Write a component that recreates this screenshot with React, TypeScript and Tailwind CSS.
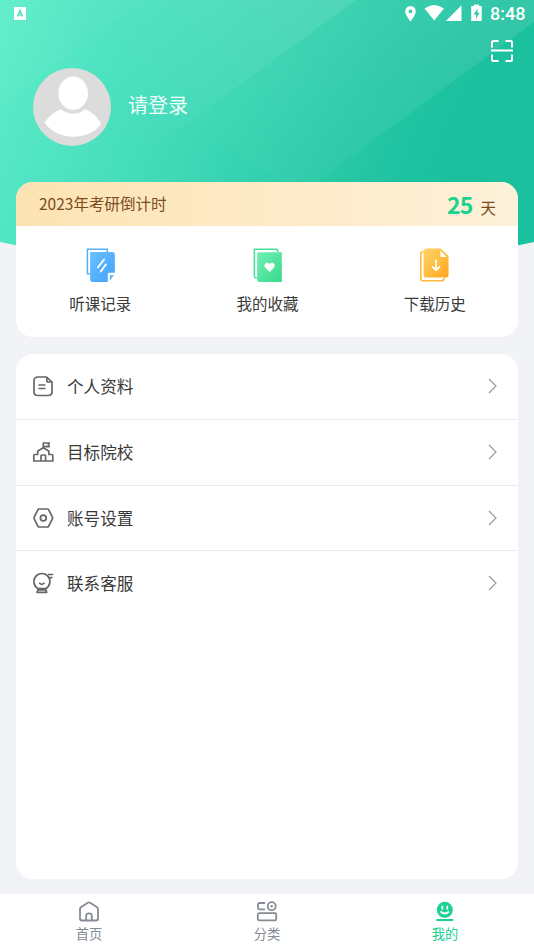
import type { ReactNode } from "react";

type Item = {
  label: string;
  icon: ReactNode;
};

function HeaderBackdrop() {
  return (
    <svg className="absolute inset-x-0 top-0 h-[262px] w-full" viewBox="0 0 534 262" preserveAspectRatio="none">
      <defs>
        <linearGradient id="base" gradientUnits="userSpaceOnUse" x1="0" y1="20" x2="440" y2="200">
          <stop offset="0" stopColor="#5eeeca" />
          <stop offset="0.2" stopColor="#50e4c2" />
          <stop offset="0.4" stopColor="#43dcb9" />
          <stop offset="0.62" stopColor="#34d1af" />
          <stop offset="0.78" stopColor="#27c8a6" />
          <stop offset="0.92" stopColor="#1dc2a0" />
          <stop offset="1" stopColor="#1bc09e" />
        </linearGradient>
        <linearGradient id="shineTop" gradientUnits="userSpaceOnUse" x1="110" y1="90" x2="340" y2="0">
          <stop offset="0" stopColor="#fff" stopOpacity="0" />
          <stop offset="1" stopColor="#fff" stopOpacity="0.1" />
        </linearGradient>
        <linearGradient id="shineMid" gradientUnits="userSpaceOnUse" x1="170" y1="160" x2="534" y2="0">
          <stop offset="0" stopColor="#fff" stopOpacity="0" />
          <stop offset="0.3" stopColor="#fff" stopOpacity="0.03" />
          <stop offset="1" stopColor="#fff" stopOpacity="0.11" />
        </linearGradient>
        <clipPath id="headerShape">
          <path d="M0 0H534V242Q267 300 0 242Z" />
        </clipPath>
      </defs>
      <g clipPath="url(#headerShape)">
        <rect width="534" height="262" fill="url(#base)" />
        <path d="M0 0H534V22L300 194L190 121L0 256Z" fill="url(#shineMid)" />
        <path d="M0 0H356L190 121L60 212L0 225Z" fill="url(#shineTop)" />
        <path d="M0 0H143L0 106Z" fill="#fff" fillOpacity="0.03" />
      </g>
    </svg>
  );
}

function StatusBar() {
  return (
    <div className="flex h-[27px] items-center justify-between pl-[14px] pr-[9px] text-white">
      <svg width="12" height="13" viewBox="0 0 12 13">
        <rect width="12" height="13" fill="#fff" />
        <path d="M3.5 9.5L6 3.5L8.5 9.5M4.4 7.7H7.6" fill="none" stroke="#50dfbe" strokeWidth="1.5" />
      </svg>
      <div className="flex items-center">
        <svg className="-mt-[1px]" width="80" height="18" viewBox="0 0 80 18" fill="#fff">
          <path fillRule="evenodd" d="M6.5 2A5.3 5.3 0 0 0 1.2 7.2C1.2 11 6.5 17.4 6.5 17.4S11.8 11 11.8 7.2A5.3 5.3 0 0 0 6.5 2ZM6.5 5.4A1.9 1.9 0 1 1 6.5 9.2A1.9 1.9 0 0 1 6.5 5.4Z" />
          <path d="M20.5 4.6Q30.2-2.6 40 4.6L30.2 16.4Z" />
          <path d="M57.5 1.2V17H42Z" />
          <path fillRule="evenodd" d="M70 .4H75V2H77.7V17H67.2V2H70ZM73.5 4.8L69.6 10.4H72V14.8L75.6 8.8H73.5Z" />
        </svg>
        <span className="ml-[6px] w-[35px] whitespace-nowrap font-[Roboto] text-[18px] font-medium leading-none">8:48</span>
      </div>
    </div>
  );
}

function ScanIcon() {
  return (
    <svg width="24" height="24" viewBox="0 0 24 24" fill="none" stroke="#fff" strokeWidth="2">
      <path d="M2 8.5V3.5Q2 2 3.5 2H8.5M15.5 2H20.5Q22 2 22 3.5V8.5M22 15.5V20.5Q22 22 20.5 22H15.5M8.5 22H3.5Q2 22 2 20.5V15.5M1 11.5H23" />
    </svg>
  );
}

function Avatar() {
  return (
    <svg width="78" height="78" viewBox="0 0 78 78">
      <circle cx="39" cy="39" r="39" fill="#dcdcdc" />
      <ellipse cx="40.2" cy="25.3" rx="14.8" ry="16.7" fill="#fff" />
      <path d="M11.6 54.5C16 48 22 43.3 28 41.2Q40.2 50.5 52 41.2C59 43.5 65 49.5 68 55.8C58 72.5 24 74 11.6 54.5Z" fill="#fff" />
    </svg>
  );
}

const actions: Item[] = [
  {
    label: "听课记录",
    icon: (
      <svg width="30" height="34" viewBox="-.8 0 30 34">
        <defs>
          <linearGradient id="blue" x1="0" y1="0" x2="1" y2="1">
            <stop stopColor="#69c2ff" />
            <stop offset="1" stopColor="#439fff" />
          </linearGradient>
        </defs>
        <path d="M4 25.8H1.6V1.3H21.5V4" fill="none" stroke="#55b0ff" strokeWidth="1.5" />
        <path d="M5.3 4H26.5Q29 4 29 6.5V24.8H23.3Q22 24.8 22 26.2V34H7Q4.3 34 4.3 31.2V5Q4.3 4 5.3 4Z" fill="url(#blue)" />
        <path d="M18.3 11.5L12 19.5M20 16.5L15 23.5" stroke="#fff" strokeWidth="1.8" strokeLinecap="round" />
        <path d="M24 32V27.2H28.2L27 29H25.8V31Z" fill="#55b0ff" />
      </svg>
    ),
  },
  {
    label: "我的收藏",
    icon: (
      <svg width="30" height="34" viewBox="-.8 0 30 34">
        <defs>
          <linearGradient id="green" x1="0" y1="0" x2="1" y2="1">
            <stop stopColor="#74f0b4" />
            <stop offset="1" stopColor="#35d98b" />
          </linearGradient>
        </defs>
        <path d="M4 29.8H3.2Q1.6 29.8 1.6 28.2V1.3H23.2Q25 1.3 25 4" fill="none" stroke="#48dd98" strokeWidth="1.5" />
        <path d="M6 4.3H29V34H7Q4.3 34 4.3 31.2V6Q4.3 4.3 6 4.3Z" fill="url(#green)" />
        <path d="M16.8 24L12.6 19.8C9.8 16.8 14 12.9 16.8 16C19.6 12.9 23.8 16.8 21 19.8Z" fill="#fff" />
      </svg>
    ),
  },
  {
    label: "下载历史",
    icon: (
      <svg width="30" height="34" viewBox="0.7 0 30 34">
        <defs>
          <linearGradient id="yellow" x1="0" y1="0" x2="1" y2="1">
            <stop stopColor="#ffd568" />
            <stop offset="1" stopColor="#ffa61f" />
          </linearGradient>
        </defs>
        <path d="M4.5 4H2.8Q1.5 4 1.5 5.3V30.5Q1.5 32.8 3.8 32.8H22Q24.5 32.8 25 30" fill="none" stroke="#fdba3d" strokeWidth="1.6" />
        <path d="M7 .5H21.5L29.2 8V27Q29.2 29.5 26.7 29.5H6.8Q4.3 29.5 4.3 27V3.2Q4.3 .5 7 .5Z" fill="url(#yellow)" />
        <path d="M21.2 2.4V9H27.3Z" fill="#fff" />
        <path d="M16.8 11.5V22M12.8 18.3L16.8 22.2L20.8 18.3" fill="none" stroke="#fff" strokeWidth="1.7" />
      </svg>
    ),
  },
];

const menu: Item[] = [
  {
    label: "个人资料",
    icon: (
      <>
        <path d="M14.5 2H6Q2 2 2 6V17Q2 20.5 6 20.5H16Q20 20.5 20 17V7.2Z" />
        <path d="M14.8 2.2V5.2Q14.8 7 16.5 7H19.5M6.5 10H13.5M6.5 13.5H13.5" />
      </>
    ),
  },
  {
    label: "目标院校",
    icon: (
      <>
        <path d="M1.8 20V14.5Q1.8 13.5 2.8 13.5H5.7V10.8Q5.7 10.1 6.3 9.7L11.3 6.8L16.3 9.7Q16.9 10.1 16.9 10.8V13.5H19.8Q20.8 13.5 20.8 14.5V20Z" />
        <path d="M9 20V14.8Q9 14 9.8 14H12.8Q13.6 14 13.6 14.8V20M11.3 6.8V2H17.3L16.3 3.8L17.3 5.6H11.3" />
      </>
    ),
  },
  {
    label: "账号设置",
    icon: (
      <>
        <path d="M7.3 2H15.3Q16.2 2 16.7 2.8L20.4 10.2Q20.8 11 20.4 11.8L16.7 19.2Q16.2 20 15.3 20H7.3Q6.4 20 5.9 19.2L2.2 11.8Q1.8 11 2.2 10.2L5.9 2.8Q6.4 2 7.3 2Z" />
        <circle cx="11.3" cy="11" r="2.9" />
      </>
    ),
  },
  {
    label: "联系客服",
    icon: (
      <>
        <path d="M6 16.5A8 8 0 1 1 13.8 16.5M6 16.5H13.8V18H6ZM7.2 10.8Q9.8 13.8 12.5 10.8M6 18L5 20.3H14.8L13.8 18" />
        <path d="M16 2.5H21.3M17.5 5.6H20.5" />
      </>
    ),
  },
];

const tabs: Item[] = [
  {
    label: "首页",
    icon: (
      <path
        d="M2 8Q2 7 2.9 6.3L9.8 1.8Q11 1 12.2 1.8L19.1 6.3Q20 7 20 8V17.5Q20 19.5 18 19.5H4Q2 19.5 2 17.5ZM8.2 19V14.5Q8.2 12.3 11 12.3T13.8 14.5V19"
        fill="none"
        stroke="#858b95"
        strokeWidth="1.8"
      />
    ),
  },
  {
    label: "分类",
    icon: (
      <g fill="none" stroke="#858b95" strokeWidth="1.8">
        <path d="M9 2H3.5Q2 2 2 3.5V6.8Q2 8.3 3.5 8.3H9" />
        <circle cx="15.7" cy="5.2" r="4" />
        <circle cx="15.7" cy="5.2" r="1.3" fill="#858b95" stroke="none" />
        <rect x="1.8" y="12.2" width="18.4" height="7.2" rx="1.5" />
      </g>
    ),
  },
  {
    label: "我的",
    icon: (
      <>
        <circle cx="10.8" cy="8.8" r="8" fill="#18d192" />
        <path d="M8.3 4.8V8.5M13.3 4.8V8.5M6.5 10.5Q10.8 14.5 15.1 10.5" fill="none" stroke="#fff" strokeWidth="1.8" />
        <path d="M2.3 19H19.3" stroke="#18d192" strokeWidth="2" />
      </>
    ),
  },
];

export default function App() {
  return (
    <div className="relative flex h-[950px] w-[534px] flex-col overflow-hidden bg-[#f1f3f7] font-['Noto_Sans_CJK_SC',sans-serif] text-[#3a3a3a]">
      <HeaderBackdrop />

      <header className="relative h-[182px] shrink-0">
        <StatusBar />
        <div className="flex items-start pl-[33px] pr-5">
          <div className="mt-[41px] flex items-center">
            <Avatar />
            <span className="ml-[17px] -mt-[5px] text-[20px] leading-7 text-white/90">请登录</span>
          </div>
          <div className="ml-auto mt-3">
            <ScanIcon />
          </div>
        </div>
      </header>

      <section className="relative mx-4 h-[155px] shrink-0 overflow-hidden rounded-[17px] bg-white">
        <div className="flex h-11 items-center justify-between bg-gradient-to-r from-[#fde3b3] to-[#fdf1d9] pl-[23px] pr-[22px] text-[#7a4b24]">
          <span className="-mt-[1px] text-[15.5px]">2023年考研倒计时</span>
          <div className="flex items-baseline">
            <strong className="text-[23px] font-bold leading-none tracking-[-0.8px] text-[#1dd291]">25</strong>
            <span className="ml-2 text-[15.5px] leading-none">天</span>
          </div>
        </div>
        <div className="grid grid-cols-3">
          {actions.map(({ label, icon }) => (
            <div key={label} className="flex flex-col items-center pl-px pt-[22px]">
              {icon}
              <span className="mt-[9px] text-[15.5px] leading-6">{label}</span>
            </div>
          ))}
        </div>
      </section>

      <section className="relative mx-4 mt-[17px] h-[525px] shrink-0 overflow-hidden rounded-[17px] bg-white">
        {menu.map(({ label, icon }, index) => (
          <div
            key={label}
            className={`flex items-center pl-4 pr-5 ${index === 1 ? "h-[66px]" : index === 3 ? "h-[64px]" : "h-[65.5px]"} ${index < menu.length - 1 ? "border-b border-[#ececee]" : ""}`}
          >
            <svg width="23" height="22" viewBox="0 0 23 22" fill="none" stroke="#666" strokeWidth="1.7" strokeLinejoin="round">
              {icon}
            </svg>
            <span className="ml-3 text-[16.6px] leading-6">{label}</span>
            <svg className="ml-auto" width="11" height="16" viewBox="0 0 11 16" fill="none" stroke="#969696" strokeWidth="1.1">
              <path d="M2 1L9 8L2 15" />
            </svg>
          </div>
        ))}
      </section>

      <nav className="relative mt-auto grid h-[56px] shrink-0 grid-cols-3 bg-white text-[#858b95]">
        {tabs.map(({ label, icon }, index) => (
          <div key={label} className={`flex flex-col items-center pt-[7px] ${index === 2 ? "text-[#18d192]" : ""}`}>
            <svg width="22" height="21" viewBox="0 0 22 21">
              {icon}
            </svg>
            <span className="mt-[3px] text-[13.3px] leading-[18px]">{label}</span>
          </div>
        ))}
      </nav>
    </div>
  );
}
